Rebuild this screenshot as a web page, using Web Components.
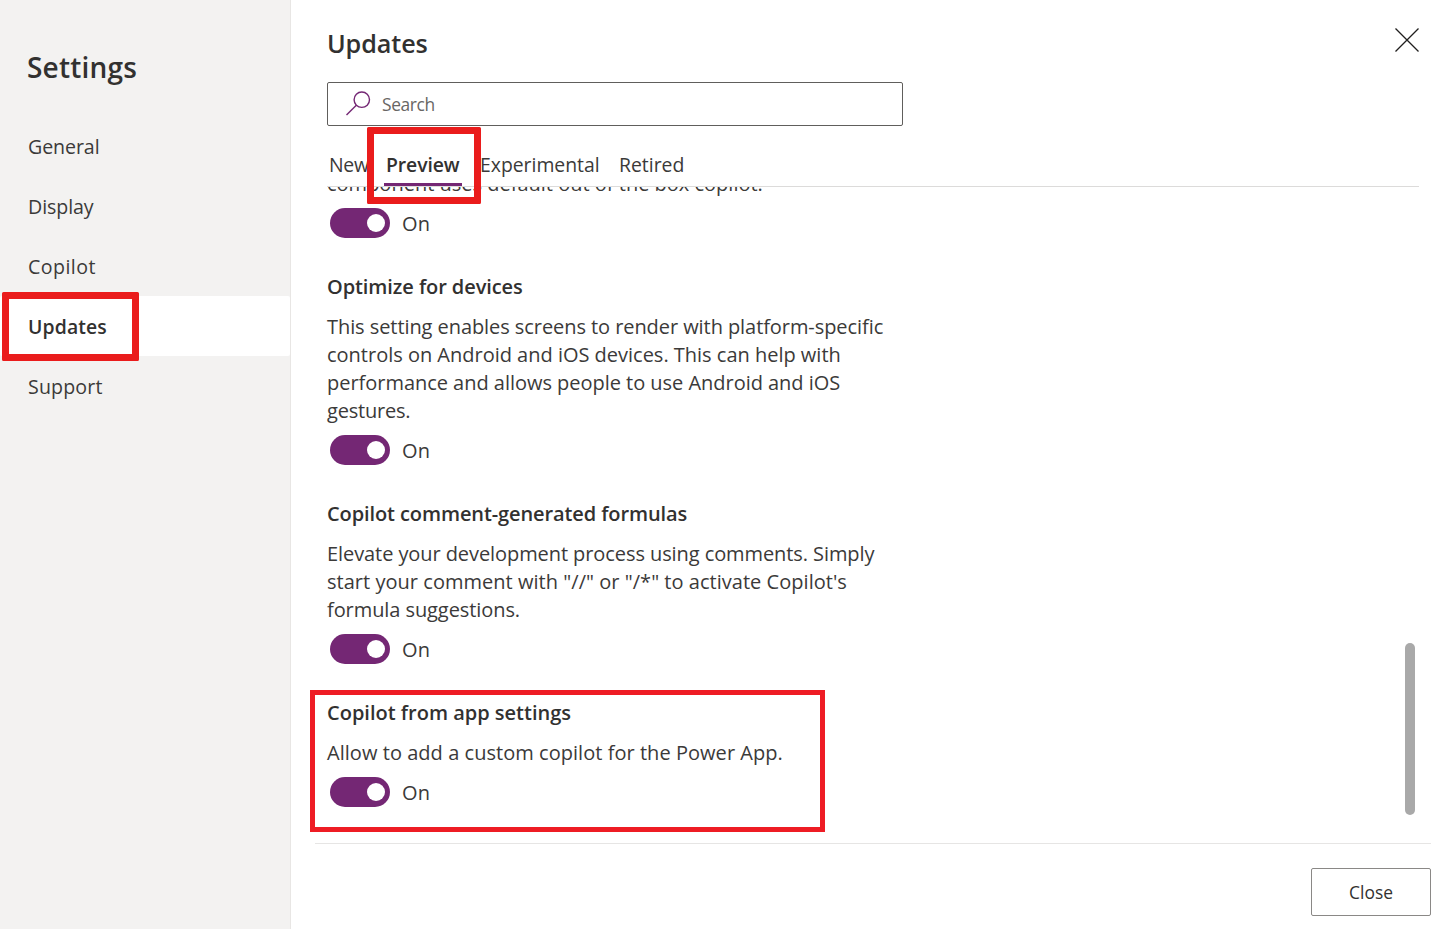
<!DOCTYPE html>
<html lang="en">
<head>
<meta charset="utf-8">
<title>Settings</title>
<style>
html,body{margin:0;height:100%}
body{font-family:"Open Sans","Noto Sans",sans-serif;color:#323130;background:#fff;overflow:hidden}
</style>
</head>
<body>
<settings-dialog></settings-dialog>
<script>
const define = (name, html) => customElements.define(name, class extends HTMLElement {
  constructor() {
    super();
    const t = document.createElement("template");
    t.innerHTML = html;
    this.attachShadow({ mode: "open" }).append(t.content.cloneNode(true));
  }
});

/* One line of text with its own tracking */
customElements.define("text-line", class extends HTMLElement {
  constructor() {
    super();
    this.attachShadow({ mode: "open" }).innerHTML =
      "<style>:host{display:block;white-space:nowrap}</style><slot></slot>";
  }
  connectedCallback() { this.style.letterSpacing = (this.getAttribute("track") || 0) + "px"; }
});

define("nav-item", `<style>
:host{display:flex;align-items:center;height:60px;padding-left:28px;font-size:19.6px;border-radius:2px;letter-spacing:-.08px;color:#3b3a39}
:host([selected]){background:#fff;font-weight:600;font-size:19.4px;letter-spacing:.12px;color:#323130}
</style><slot></slot>`);

define("settings-nav", `<style>
:host{display:block;box-sizing:border-box;width:291px;background:#f3f2f1;border-right:1px solid #e8e6e4}
h1{margin:0;height:116px;padding:47px 0 0 27px;box-sizing:border-box;font-size:28px;line-height:40px;font-weight:600;letter-spacing:.22px}
</style><h1>Settings</h1>
<nav><nav-item>General</nav-item><nav-item>Display</nav-item><nav-item style="letter-spacing:.45px">Copilot</nav-item><nav-item selected>Updates</nav-item><nav-item style="letter-spacing:.15px">Support</nav-item></nav>`);

define("search-box", `<style>
:host{display:flex;align-items:center;box-sizing:border-box;width:576px;height:44px;border:1px solid #605e5c;border-radius:2px;padding-left:18px;color:#686664;font-size:17.4px;letter-spacing:-.4px}
svg{display:block;margin-right:11px}
</style><svg width="25" height="26" viewBox="0 0 25 26" fill="none" stroke="#742774" stroke-width="1.4"><circle cx="15.8" cy="8.7" r="7.7"/><path d="M10.3 14.2.5 24"/></svg><slot></slot>`);

define("tab-item", `<style>
:host{display:flex;flex-direction:column;justify-content:flex-end;height:100%;white-space:nowrap;font-size:19.4px;line-height:28px;color:#3b3a39}
span{padding:0 2px 4px;height:28px}
i{height:3px;background:transparent}
:host([selected]){font-weight:600;color:#323130}
:host([selected]) i{background:#742774}
</style><span><slot></slot></span><i></i>`);

define("toggle-switch", `<style>
:host{display:flex;align-items:center;height:30px;margin:10px 0 0 3px;font-size:20px;gap:12px;letter-spacing:.2px;color:#3b3a39}
b{display:flex;align-items:center;justify-content:flex-end;box-sizing:border-box;width:60px;height:30px;padding-right:5px;border-radius:15px;background:#742774}
b::after{content:"";width:18px;height:18px;border-radius:50%;background:#fff}
span{line-height:30px;padding-top:2px}
</style><b></b><span>On</span>`);

define("setting-block", `<style>
:host{display:block;margin-bottom:34px;font-size:20px;line-height:28px}
.title{display:block;font-weight:600;padding-top:1px;margin-bottom:11px;height:28px}
.body{padding-top:1px;color:#3b3a39}
:host([partial]) .title{display:none}
</style><div class="title"><slot name="title"></slot></div><div class="body"><slot></slot></div><toggle-switch></toggle-switch>`);

define("close-icon", `<style>:host{display:block}svg{display:block}</style>
<svg width="26" height="26" viewBox="0 0 26 26" stroke="#201f1e" stroke-width="1.3"><path d="M1.5 1.5 24.5 24.5M24.5 1.5 1.5 24.5"/></svg>`);

define("close-button", `<style>
:host{display:flex;align-items:center;justify-content:center;box-sizing:border-box;width:120px;height:48px;border:1px solid #8a8886;border-radius:2px;font-size:17.4px;font-weight:500;letter-spacing:.05px}
</style><slot></slot>`);

/* Red frame drawn over the content it points at */
define("callout-frame", `<style>
:host{position:absolute;box-sizing:border-box;border:7px solid #ea1c1c;border-radius:1.5px;pointer-events:none}
</style>`);

define("settings-dialog", `<style>
:host{display:grid;grid-template-columns:291px 1fr;position:relative;width:1446px;height:929px;overflow:hidden}
main{display:grid;grid-template-rows:82px 44px 61px 656px 1fr;min-width:0}
header{display:flex;justify-content:space-between;padding:24px 26px 0 36px}
h2{margin:0;font-size:25.2px;line-height:38px;font-weight:600;letter-spacing:-.1px}
close-icon{margin-top:3px}
search-box{margin-left:36px}
.tabs{display:flex;gap:16px;margin:0 27px 0 36px;border-bottom:1px solid #dcdbda;box-sizing:border-box}
.view{display:flex;justify-content:space-between;overflow:hidden;margin:0 15px 0 24px;padding:0 16px 0 12px;box-sizing:border-box;border-bottom:1px solid #e6e5e4;height:657px}
.list{margin-top:-18px}
.thumb{width:10px;height:172px;margin-top:456px;border-radius:5px;background:#a9a9a9}
footer{display:flex;justify-content:flex-end;align-items:flex-start;padding:25px 15px 0 0}
</style>
<settings-nav></settings-nav>
<main>
<header><h2>Updates</h2><close-icon></close-icon></header>
<search-box>Search</search-box>
<div class="tabs"><tab-item style="width:41px;letter-spacing:-.3px">New</tab-item><tab-item selected style="width:78px;letter-spacing:-.1px">Preview</tab-item><tab-item style="width:123px;letter-spacing:-.02px">Experimental</tab-item><tab-item>Retired</tab-item></div>
<div class="view">
<div class="list">
<setting-block partial><text-line track="0">component uses default out of the box copilot.</text-line></setting-block>
<setting-block><text-line slot="title" track="-.08">Optimize for devices</text-line>
<text-line track="-.07">This setting enables screens to render with platform-specific</text-line>
<text-line track="-.01">controls on Android and iOS devices. This can help with</text-line>
<text-line track="-.03">performance and allows people to use Android and iOS</text-line>
<text-line track="-.2">gestures.</text-line></setting-block>
<setting-block><text-line slot="title" track="-.1">Copilot comment-generated formulas</text-line>
<text-line track="-.08">Elevate your development process using comments. Simply</text-line>
<text-line track=".03">start your comment with "//" or "/*" to activate Copilot's</text-line>
<text-line track="-.08">formula suggestions.</text-line></setting-block>
<setting-block><text-line slot="title" track="0">Copilot from app settings</text-line>
<text-line track=".04">Allow to add a custom copilot for the Power App.</text-line></setting-block>
</div>
<div class="thumb"></div>
</div>
<footer><close-button>Close</close-button></footer>
</main>
<callout-frame style="left:2px;top:292px;width:137px;height:69px"></callout-frame>
<callout-frame style="left:367px;top:127px;width:114px;height:77px"></callout-frame>
<callout-frame style="left:310px;top:690px;width:515px;height:142px;border-width:5px;border-color:#ee1c24;border-radius:0"></callout-frame>`);
</script>
</body>
</html>
